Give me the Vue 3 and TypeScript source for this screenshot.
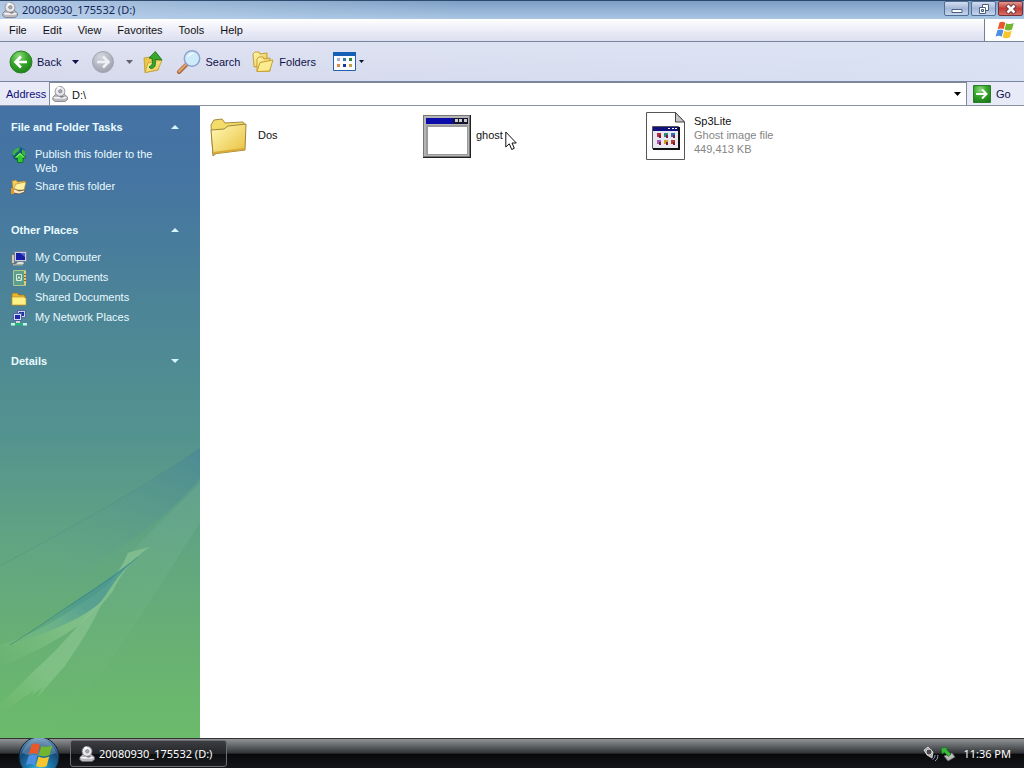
<script setup lang="ts">
import { ref } from 'vue'

interface Place {
  icon: string
  label: string
}
interface Panel {
  title: string
  open: boolean
  links: Place[]
}
interface FileItem {
  icon: string
  name: string
  details: string[]
}

const volume = '20080930_175532 (D:)'
const menus: string[] = ['File', 'Edit', 'View', 'Favorites', 'Tools', 'Help']
const address = ref('D:\\')

const panels = ref<Panel[]>([
  {
    title: 'File and Folder Tasks',
    open: true,
    links: [
      { icon: 'publish', label: 'Publish this folder to the Web' },
      { icon: 'share', label: 'Share this folder' },
    ],
  },
  {
    title: 'Other Places',
    open: true,
    links: [
      { icon: 'computer', label: 'My Computer' },
      { icon: 'documents', label: 'My Documents' },
      { icon: 'shared', label: 'Shared Documents' },
      { icon: 'network', label: 'My Network Places' },
    ],
  },
  { title: 'Details', open: false, links: [] },
])

const files: FileItem[] = [
  { icon: 'folder', name: 'Dos', details: [] },
  { icon: 'window', name: 'ghost', details: [] },
  { icon: 'image', name: 'Sp3Lite', details: ['Ghost image file', '449,413 KB'] },
]
</script>

<template>
  <div class="desktop">
    <svg class="defs" width="0" height="0" aria-hidden="true">
      <defs>
        <linearGradient id="gFolder" x1="0" y1="0" x2="1" y2="1">
          <stop offset="0" stop-color="#fffbb8" />
          <stop offset="1" stop-color="#e9be3c" />
        </linearGradient>
        <radialGradient id="gGreen" cx="0.4" cy="0.25" r="0.8">
          <stop offset="0" stop-color="#8fdc7c" />
          <stop offset="0.5" stop-color="#37a52c" />
          <stop offset="1" stop-color="#1d7d18" />
        </radialGradient>
        <radialGradient id="gGrey" cx="0.4" cy="0.25" r="0.8">
          <stop offset="0" stop-color="#d5d7df" />
          <stop offset="1" stop-color="#9b9dab" />
        </radialGradient>
        <radialGradient id="gOrb" cx="0.5" cy="0.85" r="0.9">
          <stop offset="0" stop-color="#41c4ea" />
          <stop offset="0.35" stop-color="#1c78aa" />
          <stop offset="0.65" stop-color="#164a78" />
          <stop offset="0.85" stop-color="#4d7ea8" />
          <stop offset="1" stop-color="#cfe4f2" />
        </radialGradient>
        <symbol id="drive" viewBox="0 0 16 16">
          <path d="M1 11l3-3h8l3.500 3v2.500L13 15.500H3L.7 13.500z" fill="#b9b9be" stroke="#6c6c74" stroke-width=".7" />
          <path d="M1 11h14.300L13 12.800H3z" fill="#f3f3f5" />
          <circle cx="8" cy="5.300" r="4.900" fill="#e9e9ee" stroke="#85858d" stroke-width=".8" />
          <path d="M8 5.300L5 1.500a5 5 0 0 1 3-1z" fill="#fff" />
          <circle cx="8.300" cy="5.300" r="1.700" fill="#aaaab4" stroke="#74747c" stroke-width=".6" />
          <path d="M7 10.500l4-.5 1 1-3 .8z" fill="#77777f" />
        </symbol>
        <symbol id="flag" viewBox="0 0 20 18">
          <path d="M4.500 1.500C6.500 .2 8.500 .5 10.300 1.700L8.700 8.200C6.800 7.200 4.800 7.100 2.700 8.300z" fill="#e8582b" />
          <path d="M11.200 2.200C13.500 3.400 15.800 3.300 18.800 2L17 8.600C14.500 9.900 12 10 9.600 8.600z" fill="#72b52f" />
          <path d="M2.400 9.300C4.500 8.100 6.500 8.200 8.400 9.300L6.700 15.700C4.800 14.600 2.900 14.500 .6 15.700z" fill="#4a8fe0" />
          <path d="M9.300 9.700C11.800 11.100 14.200 11 16.700 9.700L15 16.200C12.500 17.500 10 17.400 7.600 16.200z" fill="#f7c52d" />
        </symbol>
      </defs>
    </svg>

    <header class="titlebar">
      <svg class="i16"><use href="#drive" /></svg>
      <h1>{{ volume }}</h1>
      <div class="caption-buttons">
        <button type="button" aria-label="Minimize">
          <svg width="14" height="12" viewBox="0 0 14 12"><path d="M2 6.500h10v3H2z" fill="#fff" stroke="#4b5f82" /></svg>
        </button>
        <button type="button" aria-label="Restore">
          <svg width="14" height="12" viewBox="0 0 14 12">
            <path d="M5.500 1.500h6v6h-6z" fill="#fff" stroke="#4b5f82" />
            <path d="M2.500 4.500h6v6h-6z" fill="#fff" stroke="#4b5f82" />
            <path d="M4.500 6.500h2v2h-2z" fill="#aebbd5" stroke="#4b5f82" />
          </svg>
        </button>
        <button type="button" class="close" aria-label="Close">
          <svg width="14" height="12" viewBox="0 0 14 12">
            <path d="M3 2l8 8M11 2l-8 8" stroke="#5c3038" stroke-width="4.500" />
            <path d="M3.500 2.500l7 7M10.500 2.500l-7 7" stroke="#fff" stroke-width="2.600" />
          </svg>
        </button>
      </div>
    </header>

    <div class="menu-row">
      <nav class="menubar" aria-label="Menu">
        <button v-for="m in menus" :key="m" type="button">{{ m }}</button>
      </nav>
      <div class="brand"><svg width="20" height="18"><use href="#flag" /></svg></div>
    </div>

    <div class="toolbar" role="toolbar" aria-label="Navigation">
      <button type="button" class="back">
        <svg width="24" height="24" viewBox="0 0 24 24">
          <circle cx="12" cy="12" r="11" fill="url(#gGreen)" stroke="#2a8126" />
          <path d="M18 12H7M12 6.500L6.500 12l5.500 5.500" fill="none" stroke="#fff" stroke-width="2.600" />
        </svg>
        <span>Back</span>
      </button>
      <button type="button" class="drop" aria-label="Back history">
        <svg width="7" height="4" viewBox="0 0 7 4"><path d="M0 0h7L3.500 4z" fill="#10104a" /></svg>
      </button>
      <button type="button" class="forward" aria-label="Forward">
        <svg width="24" height="24" viewBox="0 0 24 24">
          <circle cx="12" cy="12" r="10.500" fill="url(#gGrey)" stroke="#a2a4b2" />
          <path d="M6 12h11M12 6.500l5.500 5.500-5.500 5.500" fill="none" stroke="#eff0f6" stroke-width="2.600" />
        </svg>
      </button>
      <button type="button" class="drop" aria-label="Forward history">
        <svg width="7" height="4" viewBox="0 0 7 4"><path d="M0 0h7L3.500 4z" fill="#63636f" /></svg>
      </button>
      <button type="button" class="up" aria-label="Up">
        <svg width="20" height="24" viewBox="0 0 20 24">
          <path d="M1 8l6-1 1.500 2L17 7.500 15 20 2 22.500z" fill="#edc64c" stroke="#b9952c" stroke-width=".8" />
          <path d="M2 22.500L5 13l14-3-4 10z" fill="url(#gFolder)" stroke="#c39e32" stroke-width=".8" />
          <path d="M7.500 18.500c5 0 5.500-4 4.500-9H15.500l3.500.5-6.700-8.500L6 8l3 .3c1 5 .5 7-3 8.700z" fill="#35a72d" stroke="#17741a" stroke-width=".9" />
        </svg>
      </button>
      <button type="button" class="search">
        <svg width="24" height="24" viewBox="0 0 24 24">
          <path d="M2 22l8-8" stroke="#a3683e" stroke-width="4" stroke-linecap="round" />
          <path d="M2 21.500l7.500-7.500" stroke="#e8a36c" stroke-width="2" stroke-linecap="round" />
          <circle cx="15" cy="8.500" r="7.700" fill="#cdebfb" stroke="#8ea4cf" stroke-width="1.500" />
          <path d="M10.500 8a5 5 0 0 1 7-4.500c-3 .5-5 2-7 4.500z" fill="#fff" />
        </svg>
        <span>Search</span>
      </button>
      <button type="button" class="folders">
        <svg width="22" height="22" viewBox="0 0 22 22">
          <path d="M1 3l2-2h4l1 2 7-1v12L2 16z" fill="url(#gFolder)" stroke="#c79e2b" />
          <path d="M5 8l2-2h4l1 2 6-1v13L5 20.500z" fill="url(#gFolder)" stroke="#c79e2b" />
          <path d="M5 20.500L8 11.500l13-2.500-3.500 11z" fill="#fcec90" stroke="#c79e2b" />
        </svg>
        <span>Folders</span>
      </button>
      <button type="button" class="views" aria-label="Views">
        <svg width="23" height="19" viewBox="0 0 23 19">
          <path d="M.5.5h22v18H.5z" fill="#fdfdff" stroke="#2262ad" />
          <path d="M0 0h23v4H0z" fill="#155fb4" />
          <path d="M4 6h3v3H4z" fill="#a3afcf" /><path d="M10 6h3v3h-3z" fill="#357ab7" /><path d="M16 6h3v3h-3z" fill="#308a35" />
          <path d="M4 12h3v3H4z" fill="#dc8b4a" /><path d="M10 12h3v3h-3z" fill="#163a98" /><path d="M16 12h3v3h-3z" fill="#c6a23e" />
        </svg>
        <svg width="5" height="3" viewBox="0 0 5 3"><path d="M0 0h5L2.500 3z" fill="#101030" /></svg>
      </button>
    </div>

    <form class="address" @submit.prevent>
      <label for="path">Address</label>
      <div class="field">
        <svg class="i16"><use href="#drive" /></svg>
        <input id="path" v-model="address" type="text" autocomplete="off" spellcheck="false" />
        <button type="button" aria-label="Show addresses">
          <svg width="7" height="4" viewBox="0 0 7 4"><path d="M0 0h7L3.500 4z" fill="#000" /></svg>
        </button>
      </div>
      <button type="submit" class="go">
        <svg width="18" height="18" viewBox="0 0 18 18">
          <path d="M.5.500h17v17H.5z" fill="url(#gGreen)" stroke="#2c7c2b" />
          <path d="M3 9h10M9 4.500L13.500 9 9 13.500" fill="none" stroke="#fff" stroke-width="2" />
        </svg>
        <span>Go</span>
      </button>
    </form>

    <div class="content">
      <aside>
        <svg class="aurora" viewBox="0 0 200 310" preserveAspectRatio="none" aria-hidden="true">
          <defs>
            <linearGradient id="gBand" x1="1" y1="0" x2="0" y2="1">
              <stop offset="0" stop-color="#478499" stop-opacity=".6" />
              <stop offset="0.4" stop-color="#559690" stop-opacity=".25" />
              <stop offset="1" stop-color="#6db387" stop-opacity="0" />
            </linearGradient>
            <linearGradient id="gPale" x1="1" y1="0" x2="0" y2="1">
              <stop offset="0" stop-color="#7ab49c" stop-opacity=".3" />
              <stop offset="1" stop-color="#7fc183" stop-opacity="0" />
            </linearGradient>
            <linearGradient id="gRay" x1="1" y1="0" x2="0" y2="1">
              <stop offset="0" stop-color="#86c090" stop-opacity=".8" />
              <stop offset="0.6" stop-color="#8bc88f" stop-opacity=".65" />
              <stop offset="1" stop-color="#8bcb7f" stop-opacity="0" />
            </linearGradient>
            <linearGradient id="gTeal" x1="1" y1="0" x2="0" y2="1">
              <stop offset="0" stop-color="#459394" stop-opacity=".8" />
              <stop offset="0.5" stop-color="#459394" stop-opacity=".65" />
              <stop offset="1" stop-color="#5aa890" stop-opacity="0" />
            </linearGradient>
          </defs>
          <path d="M200 20C150 55 90 90 0 138V190C80 145 150 110 200 50z" fill="url(#gBand)" />
          <path d="M200 20C150 55 90 90 0 138" fill="none" stroke="#498985" stroke-opacity=".35" />
          <path d="M200 55C150 105 110 140 105 170L50 260 40 310C110 250 150 170 200 95z" fill="url(#gPale)" />
          <path d="M150 119L139 122 128 125C119 146 110 158 90 170 60 190 35 207 0 217V239C40 222 85 202 113 163 120 148 133 130 150 119z" fill="url(#gRay)" />
          <path d="M105 170C82 190 62 220 35 242 20 257 10 268 0 276V286L35 262 31 268 42 260 37 270 65 238C80 216 91 200 103 173z" fill="url(#gRay)" />
          <path d="M138 129C115 147 92 162 60 184 40 198 25 208 10 217 50 205 84 190 101 174 113 158 117 147 138 129z" fill="url(#gTeal)" />
          <path d="M138 129C115 149 90 164 60 184 40 198 25 208 10 217" fill="none" stroke="#387f83" stroke-opacity=".6" />
        </svg>

        <section v-for="p in panels" :key="p.title">
          <h2>
            <button type="button" :aria-expanded="p.open" @click="p.open = !p.open">
              <span>{{ p.title }}</span>
              <svg width="8" height="4" viewBox="0 0 8 4"><path :d="p.open ? 'M0 4h8L4 0z' : 'M0 0h8L4 4z'" fill="#d5f5ff" /></svg>
            </button>
          </h2>
          <ul v-if="p.open && p.links.length">
            <li v-for="l in p.links" :key="l.label">
              <a href="#">
                <svg class="i16" viewBox="0 0 16 16">
                  <template v-if="l.icon === 'publish'">
                    <circle cx="8" cy="7" r="6.800" fill="#17558f" />
                    <path d="M2 4c2-3 5-4 7-3.500L8 4 5 6 3 9 1 7zM11 2l3 2 .8 4-2 2-2-3z" fill="#3fae4e" />
                    <path d="M9 5l6 6h-3v4.500H6.500V11H3z" fill="#2fc82e" stroke="#0f681b" stroke-width=".8" />
                    <path d="M9 6.500l-4 4M9 6.500l4 4" stroke="#b7ffa5" />
                  </template>
                  <template v-else-if="l.icon === 'share'">
                    <path d="M1 2l4-1 1.500 2L14 2l-1 9H2z" fill="#f4cd62" stroke="#a67a24" stroke-width=".6" />
                    <path d="M2 11L5 5l10-2-2 8z" fill="#fff3a2" stroke="#b68a2b" stroke-width=".6" />
                    <path d="M0 10h4l4 2 5-1 1 2-6 2-5-1H0z" fill="#f8e8c5" stroke="#60421e" stroke-width=".7" />
                    <path d="M0 9h3v6H0z" fill="#e29a28" />
                  </template>
                  <template v-else-if="l.icon === 'computer'">
                    <path d="M.5 4.500h3v9h-3z" fill="#c8cbbd" stroke="#72756b" />
                    <path d="M3.500 1.500h12v10h-12z" fill="#c9cfdc" stroke="#77809a" />
                    <path d="M5 3h9v7H5z" fill="#1720a4" /><path d="M9 3h5v4z" fill="#5366da" />
                    <path d="M7 12h5l1 2H5z" fill="#dfe0d4" /><path d="M2 14h10v1.500H2z" fill="#a9ab9c" />
                  </template>
                  <template v-else-if="l.icon === 'documents'">
                    <path d="M2.500.500h12v15h-12z" fill="#5d9f8e" stroke="#b3c58b" />
                    <path d="M13 1h2v14h-2z" fill="#e0cc71" /><path d="M13 4h2v1h-2zM13 7h2v1h-2zM13 10h2v1h-2z" fill="#9d5932" />
                    <path d="M5.500 4.500h5v6h-5z" fill="#4f8f86" stroke="#d7efd9" /><path d="M6.500 9.500l1.500-3 1.500 3" fill="none" stroke="#d7efd9" />
                  </template>
                  <template v-else-if="l.icon === 'shared'">
                    <path d="M1 15V4l1-1h4l2 2h5l1 1v9z" fill="#e9b42f" stroke="#9b711b" stroke-width=".7" />
                    <path d="M1 15V7h11l3 1v7z" fill="#fff184" stroke="#bc9328" stroke-width=".7" />
                  </template>
                  <template v-else>
                    <path d="M6.500.500h8v7h-8z" fill="#c9d1ec" stroke="#5363a2" /><path d="M8 2h5v4H8z" fill="#1e35a2" />
                    <path d="M2.500 3.500h8v7h-8z" fill="#d5dcf2" stroke="#5363a2" /><path d="M4 5h5v4H4z" fill="#1e2da6" />
                    <path d="M5 11h4v2H5z" fill="#d6d8d0" />
                    <path d="M0 13h16v2.500H0z" fill="#25b184" /><path d="M0 13h4v2.500H0zM12 13h4v2.500h-4z" fill="#c9f1e0" />
                  </template>
                </svg>
                <span>{{ l.label }}</span>
              </a>
            </li>
          </ul>
        </section>
      </aside>

      <main>
        <ul class="files">
          <li v-for="f in files" :key="f.name">
            <svg width="48" height="48" viewBox="0 0 48 48" aria-hidden="true">
              <template v-if="f.icon === 'folder'">
                <path d="M6 13l3-5 8-1 3 4 18-1 2 3-1 5-31 26z" fill="#f4dc6b" stroke="#a58a3c" />
                <path d="M6 18l13-1 4-3 18-2-1 26-32 4z" fill="url(#gFolder)" stroke="#9f843a" />
                <path d="M8 41l31-4" stroke="#d7aa38" stroke-width="2" />
              </template>
              <template v-else-if="f.icon === 'window'">
                <path d="M0 3h48v43H0z" fill="#202020" /><path d="M0 3h47v42H0z" fill="#777" />
                <path d="M1 4h45v40H1z" fill="#b5b5b5" />
                <path d="M3 6h42v6H3z" fill="#0b0baa" />
                <path d="M30 6h15v6H30z" fill="#151530" />
                <path d="M32 7h3v3h-3zM36 7h3v3h-3zM41 7h3v3h-3z" fill="#ccc" />
                <path d="M3 13h42v30H3z" fill="#9a9a9a" /><path d="M5 15h39v27H5z" fill="#fff" />
              </template>
              <template v-else>
                <path d="M5.500.500h29L43.500 10v37.500h-38z" fill="#fff" stroke="#555" />
                <path d="M34.500.500V10h9z" fill="#c5c5ca" stroke="#444" />
                <path d="M11.500 14.500h26v22h-26z" fill="#e8e8f2" stroke="#555" />
                <path d="M12 37h26V15" fill="none" stroke="#111" stroke-width="2" />
                <path d="M12 15h25v4H12z" fill="#10107e" /><path d="M27 16h2v1h-2zM31 16h2v1h-2zM34 16h2v1h-2z" fill="#fff" />
                <path d="M16 21h4v4h-4z" fill="#b32b3c" /><path d="M23 21h4v4h-4z" fill="#258c7b" /><path d="M30 21h4v4h-4z" fill="#2f6fb0" />
                <path d="M16 28h4v4h-4z" fill="#a35ab7" /><path d="M23 28h4v4h-4z" fill="#c9a02b" /><path d="M30 28h4v4h-4z" fill="#b63b2b" />
                <path d="M18 23h2v3h-2zM25 23h2v3h-2zM32 23h2v3h-2zM18 30h2v3h-2zM25 30h2v3h-2zM32 30h2v3h-2z" fill="#7d1a34" />
              </template>
            </svg>
            <div class="file-text">
              <span>{{ f.name }}</span>
              <small v-for="d in f.details" :key="d">{{ d }}</small>
            </div>
            <svg v-if="f.icon === 'window'" class="pointer" width="12" height="20" viewBox="0 0 12 20" aria-hidden="true">
              <path d="M.8 1v15l3.500-3.200L6.700 18.500l2.600-1.200L7 12h4.300z" fill="#fff" stroke="#111" />
            </svg>
          </li>
        </ul>
      </main>
    </div>

    <footer class="taskbar">
      <button type="button" class="start" aria-label="Start">
        <svg width="42" height="36" viewBox="0 0 42 36">
          <circle cx="21" cy="19" r="20" fill="url(#gOrb)" stroke="#15222e" />
          <path d="M4 15C8 4 15 1 21 1s13 3 17 14C29 19 13 19 4 15z" fill="#fff" fill-opacity=".22" />
          <use href="#flag" x="7" y="4" width="29" height="27" />
        </svg>
      </button>
      <button type="button" class="task">
        <svg class="i16"><use href="#drive" /></svg>
        <span>{{ volume }}</span>
      </button>
      <div class="tray">
        <svg width="16" height="16" viewBox="0 0 16 16" aria-label="Volume" role="img">
          <path d="M1 4l4-3 5 5-1 6-5-3z" fill="#a9a9ad" stroke="#e8e8ea" stroke-width=".8" />
          <circle cx="6" cy="6" r="3" fill="#4a4a4e" stroke="#d0d0d4" />
          <path d="M9.500 13.500c2-1 2.500-3 2.500-4.500M12 15c2.500-1.500 3-4 2.800-6" fill="none" stroke="#9da9cd" />
        </svg>
        <svg width="16" height="16" viewBox="0 0 16 16" aria-label="Safely remove hardware" role="img">
          <path d="M3 10l8-3 3 4-7 4z" fill="#b9bbb9" stroke="#666" stroke-width=".8" />
          <path d="M0 2l7-.5-1.500 2L10 8l-2.500 2.500-4-4L1 8z" fill="#37ba35" stroke="#176d1b" stroke-width=".7" />
        </svg>
        <time>11:36 PM</time>
      </div>
    </footer>
  </div>
</template>

<style>
html,
body {
  margin: 0;
  background: #fff;
}
</style>

<style scoped>
.desktop {
  display: flex;
  flex-direction: column;
  min-height: 100vh;
  font: 11px/14px 'Liberation Sans', Arial, sans-serif;
  color: #111;
}
.desktop * {
  box-sizing: border-box;
}
.defs {
  position: absolute;
}
svg {
  flex: none;
  display: block;
}
button {
  display: flex;
  align-items: center;
  padding: 0;
  border: 0;
  background: none;
  font: inherit;
  color: inherit;
}
ul {
  margin: 0;
  padding: 0;
  list-style: none;
}
.i16 {
  width: 16px;
  height: 16px;
}
.titlebar {
  display: flex;
  align-items: center;
  gap: 4px;
  height: 19px;
  padding: 0 0 1px 2px;
  border-top: 1px solid #2e4a6c;
  background: linear-gradient(90deg, rgba(190, 210, 236, 0.75), rgba(190, 210, 236, 0) 45%), linear-gradient(#7d9fc4, #a9c6e4);
}
h1 {
  flex: 1;
  margin: 0;
  font: 11px/16px 'Noto Sans', sans-serif;
  color: #14285a;
}
.caption-buttons {
  display: flex;
  gap: 2px;
  align-self: flex-start;
  padding-right: 1px;
}
.caption-buttons button {
  justify-content: center;
  width: 25px;
  height: 15px;
  border: 1px solid #536e96;
  border-radius: 2px;
  background: linear-gradient(#d2def0, #a4b7d6 50%, #c5d5ec);
}
.caption-buttons .close {
  border-color: #6e3340;
  background: linear-gradient(#e39a92, #c23a36 50%, #db6e61);
}
.menu-row {
  display: flex;
  height: 23px;
  border-bottom: 1px solid #77859f;
}
.menubar {
  display: flex;
  flex: 1;
  gap: 16px;
  padding-left: 9px;
  background: linear-gradient(#fff, #e9eaf6 60%, #dddff0);
}
.brand {
  display: flex;
  align-items: center;
  justify-content: center;
  width: 40px;
  border-left: 1px solid #777f8e;
  background: #fff;
}
.toolbar {
  display: flex;
  align-items: center;
  height: 40px;
  padding-left: 9px;
  border-bottom: 1px solid #77859f;
  background: linear-gradient(90deg, rgba(255, 255, 255, 0.1), rgba(219, 229, 245, 0.7)), linear-gradient(#dcdff0, #d1d5e9);
  color: #10104a;
}
.toolbar .back {
  gap: 4px;
}
.toolbar .drop {
  margin-left: 11px;
}
.toolbar .forward {
  margin-left: 12px;
}
.toolbar .up {
  margin-left: 10px;
}
.toolbar .search {
  gap: 4px;
  margin-left: 14px;
}
.toolbar .folders {
  gap: 5px;
  margin-left: 12px;
}
.toolbar .views {
  gap: 3px;
  margin-left: 17px;
}
.address {
  display: flex;
  height: 24px;
  border-bottom: 1px solid #8a93a3;
  background: #e8eaf7;
  color: #10104a;
}
.address label {
  width: 49px;
  padding: 5px 0 0 6px;
  color: #101078;
}
.field {
  display: flex;
  flex: 1;
  align-items: center;
  gap: 4px;
  padding: 0 5px 0 2px;
  border: solid #7f899b;
  border-width: 1px 1px 0;
  background: #fff;
}
.field input {
  flex: 1;
  min-width: 0;
  padding: 1px 0 0;
  border: 0;
  outline: 0;
  background: none;
  font: inherit;
  color: #111;
}
.go {
  gap: 5px;
  width: 57px;
  padding-left: 6px;
}
.content {
  display: flex;
  flex: 1;
}
aside {
  position: relative;
  display: flex;
  flex-direction: column;
  gap: 28px;
  width: 200px;
  padding: 14px 11px;
  background: linear-gradient(#4472a5 0%, #4575a1 12%, #4d8696 34%, #53938f 52%, #61a581 70%, #68b173 86%, #6bbb6b 100%);
  color: #e8faff;
}
.aurora {
  position: absolute;
  left: 0;
  bottom: 0;
  width: 100%;
  height: 49%;
}
section {
  position: relative;
}
h2 {
  margin: 0;
  font: bold 11px/14px 'Liberation Sans', Arial, sans-serif;
}
h2 button {
  justify-content: space-between;
  width: 100%;
  padding-right: 10px;
}
aside ul {
  display: flex;
  flex-direction: column;
  gap: 4px;
  padding-top: 13px;
}
aside a {
  display: flex;
  gap: 8px;
  color: inherit;
  text-decoration: none;
}
aside a span {
  max-width: 124px;
}
main {
  flex: 1;
  background: #fff;
}
.files {
  display: grid;
  grid-template-columns: repeat(auto-fill, 218px);
  padding: 6px 5px;
}
.files li {
  position: relative;
  display: flex;
  align-items: center;
  gap: 5px;
}
.file-text {
  display: flex;
  flex-direction: column;
  padding-bottom: 2px;
}
.file-text small {
  font-size: 11px;
  color: #858585;
}
.pointer {
  position: absolute;
  left: 82px;
  top: 19px;
}
.taskbar {
  display: flex;
  align-items: center;
  height: 30px;
  padding-left: 18px;
  border-top: 1px solid #333;
  background: linear-gradient(#919396, #55585b 30%, #303235 49%, #08090a 52%, #14161a);
  font: 11px/16px 'Noto Sans', sans-serif;
  color: #fff;
}
.start {
  align-self: flex-start;
  align-items: flex-start;
  width: 42px;
  height: 30px;
  margin-top: -1px;
  overflow: hidden;
}
.task {
  gap: 4px;
  height: 27px;
  margin-left: 10px;
  padding: 0 14px 0 8px;
  border: 1px solid #6b6e72;
  border-radius: 3px;
  background: linear-gradient(#3c3e41, #24262a 50%, #0c0d0f 52%, #1b1d20);
}
.tray {
  display: flex;
  align-items: center;
  gap: 2px;
  margin-left: auto;
  padding-right: 13px;
}
time {
  margin-left: 4px;
}
</style>
